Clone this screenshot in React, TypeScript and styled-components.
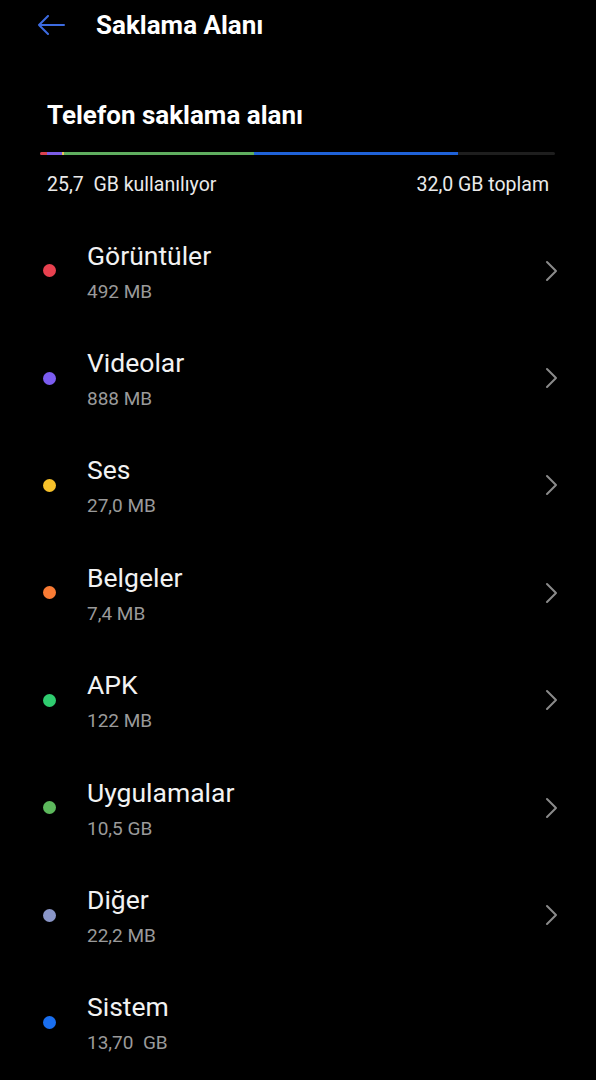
import React from "react"
import styled, { createGlobalStyle } from "styled-components"

const GlobalStyle = createGlobalStyle`
  html, body {
    margin: 0;
    padding: 0;
    background: #000;
  }
  body {
    font-family: Roboto, "Noto Sans", sans-serif;
    color: #fff;
  }
`;

const Screen = styled.div`
  width: 596px;
  min-height: 1080px;
  background: #000;
  overflow: hidden;
`;

const TopBar = styled.div`
  height: 50px;
  display: flex;
  align-items: center;
  padding-left: 37px;
`;

const BackButton = styled.div`
  width: 28px;
  height: 20px;
  display: flex;
  align-items: center;
  margin-right: 31px;
`;

const PageTitle = styled.h1`
  margin: 0;
  font-size: 26px;
  font-weight: 700;
`;

const Summary = styled.section`
  padding: 0 41px 0 40px;
`;

const SectionTitle = styled.h2`
  margin: 52px 0 0 7px;
  font-size: 26px;
  line-height: 26px;
  font-weight: 700;
`;

const UsageBar = styled.div`
  margin-top: 24px;
  height: 3px;
  display: flex;
  background: #1e1e1e;
  border-radius: 2px;
  overflow: hidden;
`;

const Segment = styled.div<{ $color: string }>`
  height: 100%;
  background: ${(p) => p.$color};
`;

const UsageRow = styled.div`
  display: flex;
  justify-content: space-between;
  margin: 19px 6px 0 7px;
  font-size: 19.5px;
  line-height: 22px;
  color: #eaeaea;
  white-space: pre;
`;

const List = styled.div`
  margin-top: 21px;
`;

const Row = styled.div`
  height: 107.4px;
  display: flex;
  align-items: center;
  padding: 0 36px 0 43px;
`;

const Dot = styled.span<{ $color: string }>`
  width: 13px;
  height: 13px;
  border-radius: 50%;
  background: ${(p) => p.$color};
  margin-right: 31px;
  flex-shrink: 0;
`;

const RowText = styled.div`
  flex: 1;
  display: flex;
  flex-direction: column;
  margin-top: 2px;
`;

const RowTitle = styled.div`
  font-size: 26.5px;
  line-height: 32px;
  color: #f2f2f2;
`;

const RowSize = styled.div`
  margin-top: 8px;
  font-size: 19px;
  line-height: 24px;
  color: #9a9a9a;
  white-space: pre;
`;

const Chevron = styled.svg`
  width: 20px;
  height: 22px;
  flex-shrink: 0;
`;

const segments = [
  { color: "#d9414f", width: 7 },
  { color: "#7b5ce6", width: 15 },
  { color: "#e8c25a", width: 2 },
  { color: "#5fae5f", width: 190 },
  { color: "#1f62d8", width: 204 },
];

const items = [
  { name: "Görüntüler", size: "492 MB", color: "#e8414f", arrow: true },
  { name: "Videolar", size: "888 MB", color: "#7b5cf0", arrow: true },
  { name: "Ses", size: "27,0 MB", color: "#f7c12a", arrow: true },
  { name: "Belgeler", size: "7,4 MB", color: "#f97b34", arrow: true },
  { name: "APK", size: "122 MB", color: "#2fcc6f", arrow: true },
  { name: "Uygulamalar", size: "10,5 GB", color: "#5cb85c", arrow: true },
  { name: "Diğer", size: "22,2 MB", color: "#8a96c8", arrow: true },
  { name: "Sistem", size: "13,70  GB", color: "#1a6ff0", arrow: false },
];

export default function App() {
  return (
    <>
      <GlobalStyle />
      <Screen>
        <TopBar>
          <BackButton>
            <svg width="28" height="20" viewBox="0 0 28 20" fill="none">
              <path d="M27 10H2M11 1L2 10l9 9" stroke="#3d6be0" strokeWidth="2" strokeLinecap="round" strokeLinejoin="round" />
            </svg>
          </BackButton>
          <PageTitle>Saklama Alanı</PageTitle>
        </TopBar>
        <Summary>
          <SectionTitle>Telefon saklama alanı</SectionTitle>
          <UsageBar>
            {segments.map((s, i) => (
              <Segment key={i} $color={s.color} style={{ width: s.width }} />
            ))}
          </UsageBar>
          <UsageRow>
            <span>25,7  GB kullanılıyor</span>
            <span>32,0 GB toplam</span>
          </UsageRow>
        </Summary>
        <List>
          {items.map((it) => (
            <Row key={it.name}>
              <Dot $color={it.color} />
              <RowText>
                <RowTitle>{it.name}</RowTitle>
                <RowSize>{it.size}</RowSize>
              </RowText>
              {it.arrow && (
                <Chevron viewBox="0 0 20 22" fill="none">
                  <path d="M7 2l9 9-9 9" stroke="#8a8a8a" strokeWidth="2" strokeLinecap="round" strokeLinejoin="round" />
                </Chevron>
              )}
            </Row>
          ))}
        </List>
      </Screen>
    </>
  )
}
